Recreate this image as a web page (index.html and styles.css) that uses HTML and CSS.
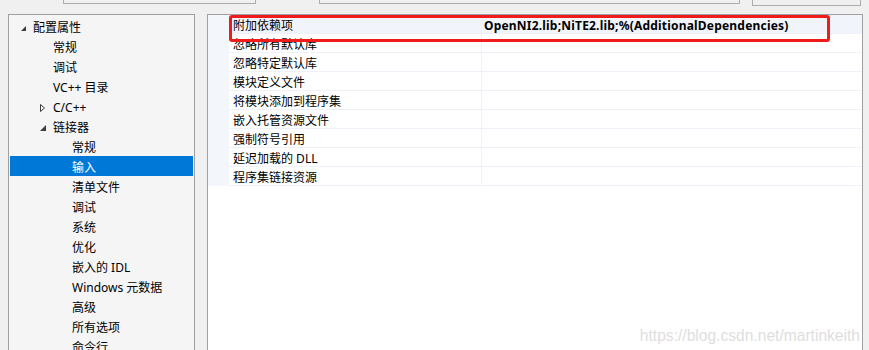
FILE: index.html
```html
<!DOCTYPE html>
<html lang="zh-CN">
<head>
  <meta charset="UTF-8">
  <title>链接器 - 输入</title>
  <link rel="stylesheet" href="styles.css">
</head>
<body>
  <!-- 顶部按钮（只露出底边） -->
  <div class="topbar">
    <div class="top-btn btn-a"></div>
    <div class="top-btn btn-b"></div>
    <div class="top-btn btn-c"></div>
  </div>

  <div class="main">
    <!-- 左侧属性树 -->
    <div class="tree">
      <div class="tree-row lvl0">
        <svg class="arrow" width="14" height="9" viewBox="0 0 14 9"><polygon points="2,8 7,8 7,3" fill="#3c3c3c"/></svg>配置属性
      </div>
      <div class="tree-row lvl1">常规</div>
      <div class="tree-row lvl1">调试</div>
      <div class="tree-row lvl1">VC++ 目录</div>
      <div class="tree-row lvl1">
        <svg class="arrow" width="14" height="10" viewBox="0 0 14 10"><polygon points="1.5,1.5 1.5,8.5 5.5,5" fill="none" stroke="#3c3c3c" stroke-width="1"/></svg>C/C++
      </div>
      <div class="tree-row lvl1">
        <svg class="arrow" width="14" height="9" viewBox="0 0 14 9"><polygon points="1,8 7,8 7,2" fill="#3c3c3c"/></svg>链接器
      </div>
      <div class="tree-row lvl2">常规</div>
      <div class="tree-row lvl2 selected">输入</div>
      <div class="tree-row lvl2">清单文件</div>
      <div class="tree-row lvl2">调试</div>
      <div class="tree-row lvl2">系统</div>
      <div class="tree-row lvl2">优化</div>
      <div class="tree-row lvl2">嵌入的 IDL</div>
      <div class="tree-row lvl2">Windows 元数据</div>
      <div class="tree-row lvl2">高级</div>
      <div class="tree-row lvl2">所有选项</div>
      <div class="tree-row lvl2">命令行</div>
    </div>

    <!-- 右侧属性表 -->
    <div class="grid-panel">
      <div class="prop-grid">
        <div class="strip"></div><div class="name current">附加依赖项</div><div class="value current">OpenNI2.lib;NiTE2.lib;%(AdditionalDependencies)</div>
        <div class="strip"></div><div class="name">忽略所有默认库</div><div class="value"></div>
        <div class="strip"></div><div class="name">忽略特定默认库</div><div class="value"></div>
        <div class="strip"></div><div class="name">模块定义文件</div><div class="value"></div>
        <div class="strip"></div><div class="name">将模块添加到程序集</div><div class="value"></div>
        <div class="strip"></div><div class="name">嵌入托管资源文件</div><div class="value"></div>
        <div class="strip"></div><div class="name">强制符号引用</div><div class="value"></div>
        <div class="strip"></div><div class="name">延迟加载的 DLL</div><div class="value"></div>
        <div class="strip"></div><div class="name">程序集链接资源</div><div class="value"></div>
      </div>
      <!-- 标注框 -->
      <div class="mark"></div>
      <div class="watermark">https://blog.csdn.net/martinkeith</div>
    </div>
  </div>
</body>
</html>
```

FILE: styles.css
```css
body {
  margin: 0;
  height: 350px;
  overflow: hidden;
  background-color: #f0f0f0;
  color: #000;
  font-family: "Noto Sans", "Noto Sans CJK SC", sans-serif;
  font-size: 12px;
}
.topbar {
  display: flex;
  height: 14px;
}
.top-btn {
  height: 3px;
  border: 1px solid #adadad;
  border-top: none;
  background-color: #f0f0f0;
}
.btn-a {
  margin-left: 63px;
  width: 191px;
}
.btn-b {
  margin-left: 63px;
  width: 419px;
}
.btn-c {
  margin-left: 12px;
  width: 107px;
  height: 5px;
}
.main {
  display: flex;
  height: 336px;
}
.tree {
  margin-left: 8px;
  width: 184px;
  padding: 1px 1px 0 0;
  border: 1px solid #a0a0a0;
  border-bottom: none;
  background-color: #f5f5f5;
}
.tree-row {
  display: flex;
  align-items: center;
  box-sizing: border-box;
  height: 20px;
  padding-top: 3px;
  line-height: 16px;
  white-space: nowrap;
}
.arrow {
  margin-left: -14px;
  flex: none;
}
.lvl0 {
  padding-left: 24px;
}
.lvl1 {
  padding-left: 44px;
}
.lvl2 {
  padding-left: 63px;
}
.tree-row.selected {
  margin-left: 1px;
  padding-left: 62px;
  background-color: #0078d7;
  color: #fff;
}
.grid-panel {
  position: relative;
  margin-left: 12px;
  width: 654px;
  border: 1px solid #a0a0a0;
  border-bottom: none;
  background-color: #fff;
}
.prop-grid {
  display: grid;
  grid-template-columns: 21px 253px 1fr;
  grid-auto-rows: 19px;
}
.strip {
  background-color: #f3f6fb;
}
.name, .value {
  box-sizing: border-box;
  padding-top: 3px;
  line-height: 15px;
  border-bottom: 1px solid #eef1f7;
  white-space: nowrap;
  padding-left: 4px;
}
.name {
  border-right: 1px solid #eef1f7;
}
.current {
  background-color: #f1f4fa;
}
.value.current {
  font-weight: bold;
  padding-left: 2px;
  letter-spacing: 0.2px;
}
.mark {
  position: absolute;
  left: 21px;
  top: 0;
  width: 595px;
  height: 21px;
  border: 3px solid #f01c1c;
  border-radius: 3px;
}
.watermark {
  position: absolute;
  right: 2px;
  top: 312px;
  font-family: "Liberation Sans", Arial, sans-serif;
  font-size: 15.6px;
  color: #dedede;
}
```
